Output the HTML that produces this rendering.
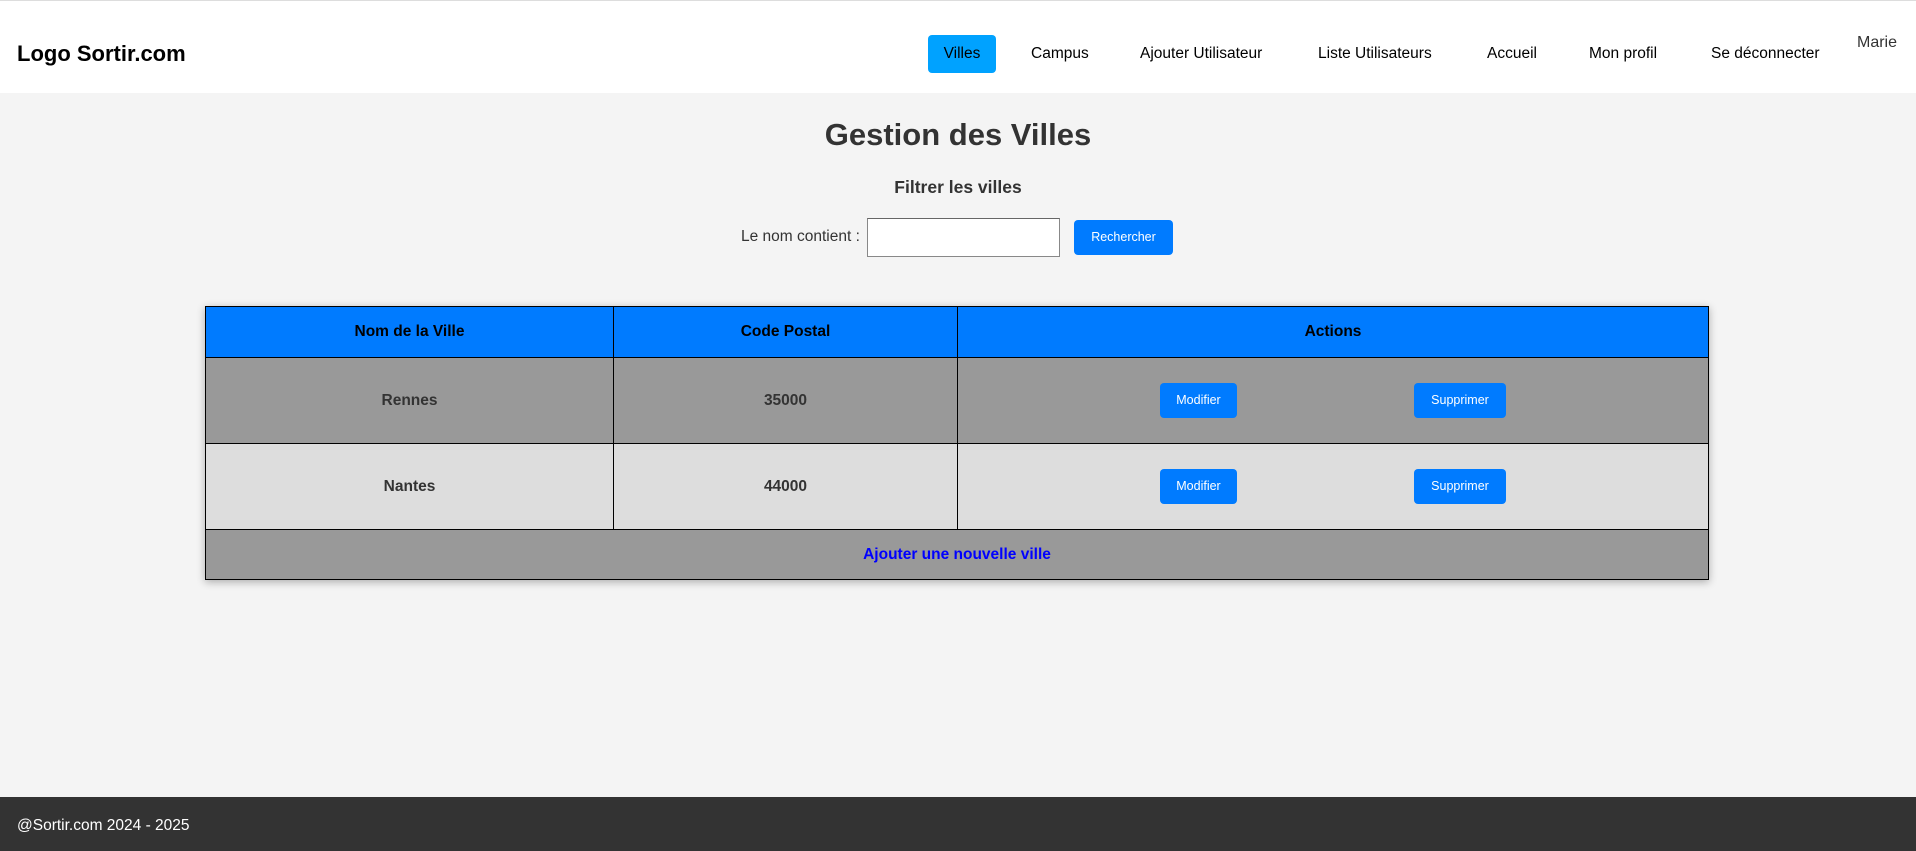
<!DOCTYPE html>
<html><head><meta charset="utf-8"><style>
*{box-sizing:border-box;margin:0;padding:0}
body{width:1916px;height:851px;background:#f4f4f4;font-family:"Liberation Sans",Arial,sans-serif;position:relative;overflow:hidden;color:#333}
header{position:absolute;left:0;top:0;width:1916px;height:93px;background:#fff;border-top:1px solid #ddd}
.logo{position:absolute;left:17px;top:40px;font-size:22px;font-weight:bold;color:#000}
.nav{position:absolute;top:34px;height:38px;line-height:38px;font-size:15.5px;color:#000;white-space:nowrap}
.villes{left:928px;width:68px;background:#00a2ff;border-radius:4px;text-align:center}
.marie{position:absolute;left:1857px;top:33px;font-size:16px;color:#333}
h1{position:absolute;top:117px;width:1916px;text-align:center;font-size:31px;color:#333}
h3{position:absolute;top:177px;width:1916px;text-align:center;font-size:17.5px;color:#333}
.lbl{position:absolute;left:741px;top:228px;font-size:15.5px;color:#333}
.inp{position:absolute;left:867px;top:218px;width:193px;height:39px;background:#fff;border:1px solid #888;border-top-color:#666}
.btn{position:absolute;background:#007bff;color:#fff;font-size:12.5px;border-radius:4px;text-align:center}
table{position:absolute;left:205px;top:306px;width:1504px;border-collapse:collapse;box-shadow:0 2px 8px rgba(0,0,0,.3)}
td,th{border:1px solid #000;text-align:center;font-size:15.5px;font-weight:bold;position:relative}
th{background:#007bff;color:#000;height:51px}
.r1 td{background:#999;height:86px}
.r2 td{background:#ddd;height:86px}
.ft td{background:#999;height:50px;color:#00f}
footer{position:absolute;left:0;top:797px;width:1916px;height:54px;background:#333;color:#fff;font-size:15.5px;padding:20px 17px}
</style></head><body>
<header>
<div class="logo">Logo Sortir.com</div>
<div class="nav villes">Villes</div>
<div class="nav" style="left:1031px">Campus</div>
<div class="nav" style="left:1140px">Ajouter Utilisateur</div>
<div class="nav" style="left:1318px">Liste Utilisateurs</div>
<div class="nav" style="left:1487px">Accueil</div>
<div class="nav" style="left:1589px">Mon profil</div>
<div class="nav" style="left:1711px">Se déconnecter</div>
<div class="marie">Marie</div>
</header>
<h1>Gestion des Villes</h1>
<h3>Filtrer les villes</h3>
<div class="lbl">Le nom contient :</div>
<div class="inp"></div>
<div class="btn" style="left:1074px;top:220px;width:99px;height:35px;line-height:35px">Rechercher</div>
<table>
<tr><th style="width:408px">Nom de la Ville</th><th style="width:344px">Code Postal</th><th>Actions</th></tr>
<tr class="r1"><td>Rennes</td><td>35000</td><td></td></tr>
<tr class="r2"><td>Nantes</td><td>44000</td><td></td></tr>
<tr class="ft"><td colspan="3">Ajouter une nouvelle ville</td></tr>
</table>
<div class="btn" style="left:1160px;top:383px;width:77px;height:35px;line-height:35px">Modifier</div>
<div class="btn" style="left:1414px;top:383px;width:92px;height:35px;line-height:35px">Supprimer</div>
<div class="btn" style="left:1160px;top:469px;width:77px;height:35px;line-height:35px">Modifier</div>
<div class="btn" style="left:1414px;top:469px;width:92px;height:35px;line-height:35px">Supprimer</div>
<footer>@Sortir.com 2024 - 2025</footer>
</body></html>
